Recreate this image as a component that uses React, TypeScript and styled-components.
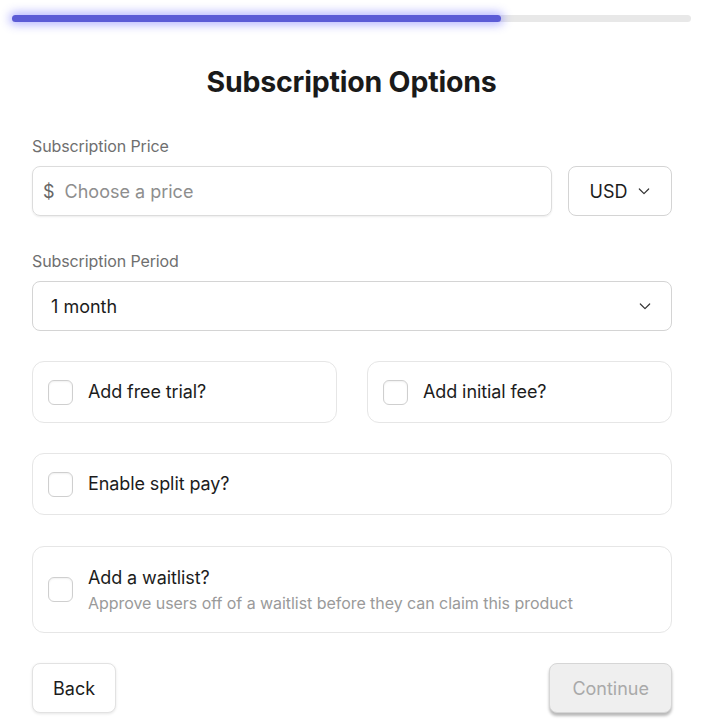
import * as React from 'react';
import styled, { createGlobalStyle } from 'styled-components';

const Global = createGlobalStyle`
  body {
    margin: 0;
    background: #ffffff;
    font-family: Inter, "Noto Sans", "Liberation Sans", sans-serif;
    color: #1c1c1c;
  }
  * { box-sizing: border-box; }
`;

const S = {
  Page: styled.div({
    width: 703,
    paddingBottom: 8,
  }),
  Track: styled.div({
    margin: '15px 12px 0',
    height: 7,
    borderRadius: 4,
    background: '#e8e8e8',
  }),
  Fill: styled.div({
    height: '100%',
    borderRadius: 4,
    background: '#5b5bd6',
    boxShadow: '0 0 10px 3px rgba(98, 98, 255, 0.45)',
  }),
  Title: styled.h1({
    margin: '42px 0 0',
    textAlign: 'center',
    fontSize: 28.5,
    fontWeight: 700,
    lineHeight: '36px',
    letterSpacing: -0.2,
    color: '#1a1a1a',
  }),
  Form: styled.div({
    padding: '0 31px 0 32px',
    display: 'flex',
    flexDirection: 'column',
  }),
  Field: styled.div<{ top: number }>(({ top }) => ({
    marginTop: top,
    display: 'flex',
    flexDirection: 'column',
    gap: 10,
  })),
  Label: styled.div({
    fontSize: 16,
    lineHeight: '20px',
    color: '#6f6f6f',
    letterSpacing: -0.1,
  }),
  Row: styled.div({
    display: 'flex',
    gap: 16,
  }),
  Input: styled.div({
    flex: 1,
    height: 50,
    border: '1px solid #dcdcdc',
    borderRadius: 8,
    boxShadow: '0 1px 2px rgba(0,0,0,0.08)',
    display: 'flex',
    alignItems: 'center',
    padding: '0 10px',
    fontSize: 18,
    gap: 10,
  }),
  Prefix: styled.span({
    color: '#666',
  }),
  Placeholder: styled.span({
    color: '#8e8e8e',
  }),
  Select: styled.div<{ wide?: boolean }>(({ wide }) => ({
    width: wide ? '100%' : 104,
    height: 50,
    border: '1px solid #d4d4d4',
    borderRadius: 8,
    display: 'flex',
    alignItems: 'center',
    justifyContent: wide ? 'space-between' : 'center',
    padding: wide ? '0 18px' : '0 0 0 2px',
    gap: 9,
    fontSize: 18,
    color: '#1c1c1c',
  })),
  Grid: styled.div({
    marginTop: 30,
    display: 'grid',
    gridTemplateColumns: '1fr 1fr',
    gap: 30,
  }),
  Card: styled.div<{ top?: number; tall?: boolean }>(({ top, tall }) => ({
    marginTop: top ?? 0,
    height: tall ? 87 : 62,
    border: '1px solid #e6e6e6',
    borderRadius: 12,
    display: 'flex',
    alignItems: 'center',
    padding: '0 15px',
    gap: 15,
  })),
  Box: styled.span({
    width: 25,
    height: 25,
    flexShrink: 0,
    border: '1.5px solid #cfcfcf',
    borderRadius: 6,
    boxShadow: 'inset 0 1px 2px rgba(0,0,0,0.06)',
  }),
  CardText: styled.div({
    display: 'flex',
    flexDirection: 'column',
    gap: 3,
  }),
  CardTitle: styled.div({
    fontSize: 18,
    lineHeight: '24px',
    color: '#1c1c1c',
    letterSpacing: -0.1,
  }),
  CardHint: styled.div({
    fontSize: 16,
    lineHeight: '20px',
    color: '#9a9a9a',
    letterSpacing: -0.05,
  }),
  Footer: styled.div({
    marginTop: 30,
    display: 'flex',
    justifyContent: 'space-between',
  }),
  Button: styled.button<{ disabled?: boolean }>(({ disabled }) => ({
    height: 50,
    padding: disabled ? '0 22px' : '0 20px',
    borderRadius: 8,
    fontFamily: 'inherit',
    fontSize: 18,
    border: disabled ? '1px solid #d6d6d6' : '1px solid #e2e2e2',
    background: disabled ? '#efefef' : '#ffffff',
    color: disabled ? '#a9a9a9' : '#1c1c1c',
    boxShadow: disabled
      ? '0 3px 3px rgba(0,0,0,0.28)'
      : '0 1px 3px rgba(0,0,0,0.1)',
    cursor: disabled ? 'default' : 'pointer',
  })),
};

const Chevron = () => (
  <svg width="16" height="16" viewBox="0 0 24 24" fill="none" stroke="#333" strokeWidth="1.8" strokeLinecap="round" strokeLinejoin="round">
    <path d="M5 9l7 7 7-7" />
  </svg>
);

const Option = ({ title, hint, top }: { title: string; hint?: string; top?: number }) => (
  <S.Card top={top} tall={!!hint}>
    <S.Box />
    <S.CardText>
      <S.CardTitle>{title}</S.CardTitle>
      {hint && <S.CardHint>{hint}</S.CardHint>}
    </S.CardText>
  </S.Card>
);

export default function App() {
  const progress = 72;
  return (
    <S.Page>
      <Global />
      <S.Track>
        <S.Fill style={{ width: `${progress}%` }} />
      </S.Track>
      <S.Title>Subscription Options</S.Title>
      <S.Form>
        <S.Field top={36}>
          <S.Label>Subscription Price</S.Label>
          <S.Row>
            <S.Input>
              <S.Prefix>$</S.Prefix>
              <S.Placeholder>Choose a price</S.Placeholder>
            </S.Input>
            <S.Select>
              USD <Chevron />
            </S.Select>
          </S.Row>
        </S.Field>
        <S.Field top={35}>
          <S.Label>Subscription Period</S.Label>
          <S.Select wide>
            1 month <Chevron />
          </S.Select>
        </S.Field>
        <S.Grid>
          <Option title="Add free trial?" />
          <Option title="Add initial fee?" />
        </S.Grid>
        <Option top={30} title="Enable split pay?" />
        <Option
          top={31}
          title="Add a waitlist?"
          hint="Approve users off of a waitlist before they can claim this product"
        />
        <S.Footer>
          <S.Button>Back</S.Button>
          <S.Button disabled>Continue</S.Button>
        </S.Footer>
      </S.Form>
    </S.Page>
  );
}
